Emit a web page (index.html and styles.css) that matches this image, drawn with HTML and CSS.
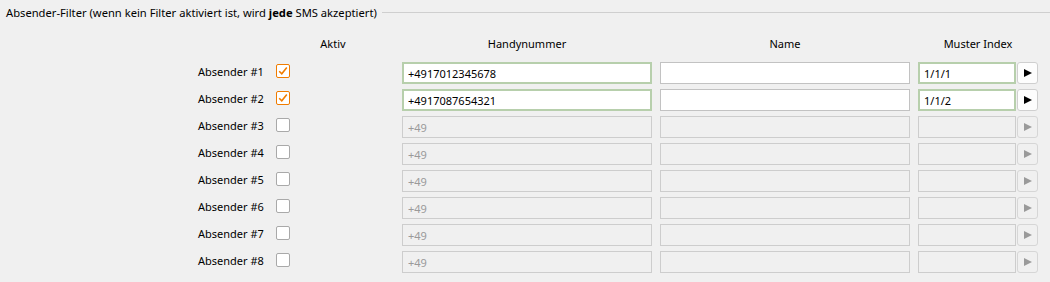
FILE: index.html
```html
<!DOCTYPE html>
<html lang="de">
<head>
<meta charset="utf-8">
<link rel="stylesheet" href="styles.css">
</head>
<body>
<section class="group">
  <div class="legend">
    <span class="legend-text">Absender-Filter (wenn kein Filter aktiviert ist, wird <b>jede</b> SMS akzeptiert)</span>
    <span class="legend-line"></span>
  </div>
  <div class="grid">
    <div></div>
    <div class="head head-aktiv">Aktiv</div>
    <div class="head head-wide">Handynummer</div>
    <div class="head head-wide">Name</div>
    <div class="head head-muster">Muster Index</div>

    <div class="label">Absender #1</div>
    <div class="cell cell-cb"><span class="cb cb-on"><svg viewBox="0 0 14 14" width="14" height="14"><path d="M3.2 7.2 L5.8 9.8 L10.8 3.6" fill="none" stroke="#f07c00" stroke-width="1.6"/></svg></span></div>
    <div class="cell"><input class="field field-on field-phone" value="+4917012345678"></div>
    <div class="cell"><input class="field field-name" value=""></div>
    <div class="cell"><input class="field field-on field-muster" value="1/1/1"></div>
    <div class="cell"><button class="play"><span class="tri"></span></button></div>

    <div class="label">Absender #2</div>
    <div class="cell cell-cb"><span class="cb cb-on"><svg viewBox="0 0 14 14" width="14" height="14"><path d="M3.2 7.2 L5.8 9.8 L10.8 3.6" fill="none" stroke="#f07c00" stroke-width="1.6"/></svg></span></div>
    <div class="cell"><input class="field field-on field-phone" value="+4917087654321"></div>
    <div class="cell"><input class="field field-name" value=""></div>
    <div class="cell"><input class="field field-on field-muster" value="1/1/2"></div>
    <div class="cell"><button class="play"><span class="tri"></span></button></div>

    <div class="label">Absender #3</div>
    <div class="cell cell-cb"><span class="cb"></span></div>
    <div class="cell"><input class="field field-off field-phone" value="+49" disabled></div>
    <div class="cell"><input class="field field-off field-name" disabled></div>
    <div class="cell"><input class="field field-off field-muster" disabled></div>
    <div class="cell"><button class="play play-off" disabled><span class="tri"></span></button></div>

    <div class="label">Absender #4</div>
    <div class="cell cell-cb"><span class="cb"></span></div>
    <div class="cell"><input class="field field-off field-phone" value="+49" disabled></div>
    <div class="cell"><input class="field field-off field-name" disabled></div>
    <div class="cell"><input class="field field-off field-muster" disabled></div>
    <div class="cell"><button class="play play-off" disabled><span class="tri"></span></button></div>

    <div class="label">Absender #5</div>
    <div class="cell cell-cb"><span class="cb"></span></div>
    <div class="cell"><input class="field field-off field-phone" value="+49" disabled></div>
    <div class="cell"><input class="field field-off field-name" disabled></div>
    <div class="cell"><input class="field field-off field-muster" disabled></div>
    <div class="cell"><button class="play play-off" disabled><span class="tri"></span></button></div>

    <div class="label">Absender #6</div>
    <div class="cell cell-cb"><span class="cb"></span></div>
    <div class="cell"><input class="field field-off field-phone" value="+49" disabled></div>
    <div class="cell"><input class="field field-off field-name" disabled></div>
    <div class="cell"><input class="field field-off field-muster" disabled></div>
    <div class="cell"><button class="play play-off" disabled><span class="tri"></span></button></div>

    <div class="label">Absender #7</div>
    <div class="cell cell-cb"><span class="cb"></span></div>
    <div class="cell"><input class="field field-off field-phone" value="+49" disabled></div>
    <div class="cell"><input class="field field-off field-name" disabled></div>
    <div class="cell"><input class="field field-off field-muster" disabled></div>
    <div class="cell"><button class="play play-off" disabled><span class="tri"></span></button></div>

    <div class="label">Absender #8</div>
    <div class="cell cell-cb"><span class="cb"></span></div>
    <div class="cell"><input class="field field-off field-phone" value="+49" disabled></div>
    <div class="cell"><input class="field field-off field-name" disabled></div>
    <div class="cell"><input class="field field-off field-muster" disabled></div>
    <div class="cell"><button class="play play-off" disabled><span class="tri"></span></button></div>
  </div>
</section>
</body>
</html>
```

FILE: styles.css
```css
html, body {
  margin: 0;
  padding: 0;
  background: #f0f0f0;
}
body {
  font-family: "Noto Sans", "DejaVu Sans", sans-serif;
  font-size: 11px;
  color: #000;
  width: 1050px;
  height: 282px;
  overflow: hidden;
}
.group {
  padding-top: 4px;
}
.legend {
  display: flex;
  align-items: center;
  height: 18px;
  padding-left: 6px;
}
.legend-text {
  white-space: nowrap;
  line-height: 18px;
  font-size: 11.2px;
}
.legend-text b {
  font-weight: 700;
}
.legend-line {
  flex: 1;
  height: 0;
  border-top: 1px solid #cfcfcf;
  margin-left: 5px;
  margin-top: -1px;
}
.grid {
  display: grid;
  grid-template-columns: 78px 126px 258px 258px 99px 21px;
  grid-template-rows: 27px;
  grid-auto-rows: 27px;
  padding-left: 198px;
  margin-top: 13px;
}
.grid > .head {
  height: 18px;
  line-height: 18px;
  text-align: center;
  white-space: nowrap;
}
.head-aktiv {
  padding-right: 12px;
}
.head-wide {
  width: 250px;
}
.head-muster {
  grid-column: span 2;
}
.label {
  display: flex;
  align-items: center;
  height: 22px;
  padding-bottom: 3px;
  box-sizing: border-box;
  white-space: nowrap;
}
.cell {
  display: flex;
  align-items: center;
  height: 22px;
}
.cell-cb {
  box-sizing: border-box;
  padding-bottom: 4px;
}
.cb {
  width: 14px;
  height: 14px;
  box-sizing: border-box;
  border: 1px solid #a9a9a9;
  border-radius: 2px;
  background: #fff;
  position: relative;
  display: inline-block;
}
.cb-on {
  border-color: #f07c00;
}
.cb svg {
  position: absolute;
  left: -1px;
  top: -1px;
}
.field {
  box-sizing: border-box;
  height: 22px;
  margin: 0;
  padding: 0 0 0 5px;
  font-family: inherit;
  font-size: 11px;
  color: #000;
  outline: none;
  border-radius: 0;
}
.field-phone, .field-name {
  width: 250px;
}
.field-muster {
  width: 98px;
}
.field-name {
  background: #fff;
  border: 1px solid #c2c2c2;
}
.field-on {
  background: #fff;
  border: 2px solid #b7cfac;
  padding-left: 4px;
}
.field-off {
  background: #f0f0f0;
  border: 1px solid #cdcdcd;
  color: #9a9a9a;
  -webkit-text-fill-color: #9a9a9a;
}
.play {
  box-sizing: border-box;
  width: 21px;
  height: 22px;
  margin: 0;
  padding: 0;
  border: 1px solid #cfcfcf;
  border-radius: 3px;
  background: #fdfdfd;
  display: flex;
  align-items: center;
  justify-content: center;
}
.play-off {
  background: #f0f0f0;
  border-color: #d6d6d6;
}
.tri {
  width: 0;
  height: 0;
  border-top: 4px solid transparent;
  border-bottom: 4px solid transparent;
  border-left: 8px solid #000;
  margin-left: 1px;
}
.play-off .tri {
  border-left-color: #9a9a9a;
}
```
